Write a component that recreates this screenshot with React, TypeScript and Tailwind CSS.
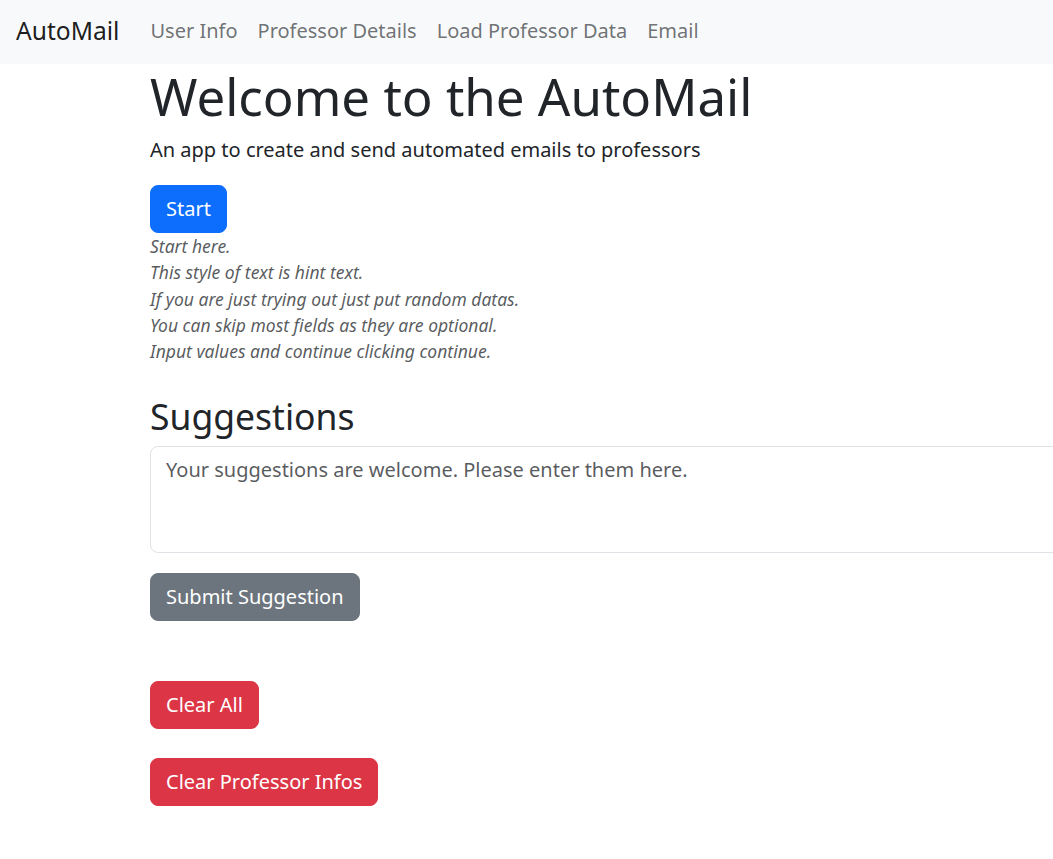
const font = { fontFamily: '"Noto Sans", sans-serif' };

function NavBar() {
  return (
    <nav className="h-16 bg-[#f8f9fa] flex items-center px-4 pb-[2px]">
      <span className="text-[24.6px] text-black/90 mr-[31px]">AutoMail</span>
      <ul className="flex items-center gap-[20px] text-[20px] text-[#212529]/65">
        <li>User Info</li>
        <li>Professor Details</li>
        <li>Load Professor Data</li>
        <li>Email</li>
      </ul>
    </nav>
  );
}

const hints = [
  "Start here.",
  "This style of text is hint text.",
  "If you are just trying out just put random datas.",
  "You can skip most fields as they are optional.",
  "Input values and continue clicking continue.",
];

const btn = "block text-white text-[20px] leading-[1.5] px-[15px] py-2 rounded-[8px] border";

export default function App() {
  return (
    <div className="min-h-[859px] bg-white text-[#212529] overflow-x-hidden" style={font}>
      <NavBar />
      <main className="pl-[150px]">
        <h1 className="text-[51px] leading-[1.2] mt-[2px] mb-[8px]">Welcome to the AutoMail</h1>
        <p className="text-[20px] leading-[1.5] mb-[20px]">
          An app to create and send automated emails to professors
        </p>
        <button className={`${btn} bg-[#0d6efd] border-[#0d6efd]`}>Start</button>
        <div className="italic text-[17.5px] leading-[26.25px] text-[#212529]/75">
          {hints.map((h) => (
            <div key={h}>{h}</div>
          ))}
        </div>
        <h2 className="text-[35.5px] leading-[1.2] mt-[31px] mb-2">Suggestions</h2>
        <textarea
          className="block w-[1000px] h-[107px] border border-[#dee2e6] rounded-[8px] px-[15px] py-2 text-[20px] leading-[1.5] placeholder:text-[#212529]/75 resize-none"
          placeholder="Your suggestions are welcome. Please enter them here."
        />
        <button className={`${btn} mt-5 bg-[#6c757d] border-[#6c757d]`}>Submit Suggestion</button>
        <div className="mt-[60px] flex flex-col items-start gap-[29px]">
          <button className={`${btn} bg-[#dc3545] border-[#dc3545]`}>Clear All</button>
          <button className={`${btn} bg-[#dc3545] border-[#dc3545]`}>Clear Professor Infos</button>
        </div>
      </main>
    </div>
  );
}
